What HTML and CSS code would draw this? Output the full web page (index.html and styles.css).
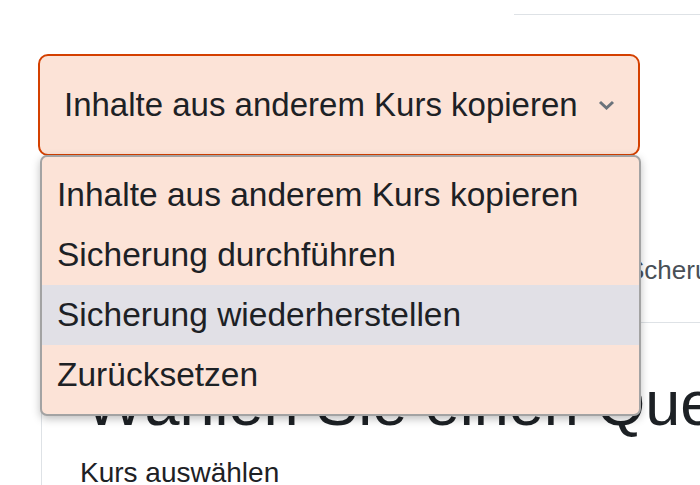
FILE: index.html
```html
<!DOCTYPE html>
<html lang="de">
<head>
    <meta charset="UTF-8">
    <meta name="viewport" content="width=device-width, initial-scale=1.0">
    <title>Import</title>
    <link rel="stylesheet" href="styles.css">
</head>
<body>
    <div class="top-bar"></div>

    <div class="action-select">
        <div class="select-box">
            <span>Inhalte aus anderem Kurs kopieren</span>
            <svg class="chevron" width="17" height="10" viewBox="0 0 17 10">
                <polyline points="2,2 8.5,8 15,2" fill="none" stroke="#6a737b" stroke-width="3"/>
            </svg>
        </div>
        <ul class="select-menu">
            <li>Inhalte aus anderem Kurs kopieren</li>
            <li>Sicherung durchführen</li>
            <li class="active">Sicherung wiederherstellen</li>
            <li>Zurücksetzen</li>
        </ul>
    </div>

    <div class="steps">Scherung</div>

    <div class="content-card">
        <h2>Wählen Sie einen Quellkurs</h2>
        <div class="field-label">Kurs auswählen</div>
    </div>
</body>
</html>
```

FILE: styles.css
```css
body {
    font-family: "Liberation Sans", Arial, sans-serif;
    color: #1d2125;
    background-color: #fff;
    margin: 0;
    width: 700px;
    height: 485px;
    overflow: hidden;
}

.top-bar {
    margin-left: 514px;
    height: 14px;
    border-bottom: 1px solid #dee2e6;
}

.action-select {
    position: relative;
    margin: 39px 0 0 38px;
    width: 602px;
}

.select-box {
    display: flex;
    justify-content: space-between;
    align-items: center;
    height: 98px;
    padding: 0 23px 0 24px;
    background-color: #fce3d7;
    border: 2px solid #d44000;
    border-radius: 10px;
    font-size: 33px;
}

.chevron {
    display: block;
}

.select-menu {
    position: absolute;
    top: 101px;
    left: 2px;
    width: 597px;
    margin: 0;
    padding: 8px 0 9px;
    list-style: none;
    background-color: #fce3d7;
    border: 2px solid #a3a3a3;
    border-radius: 7px;
    box-shadow: 0 3px 8px rgba(0, 0, 0, 0.25);
    z-index: 2;
}

.select-menu li {
    height: 60px;
    line-height: 60px;
    padding-left: 15px;
    font-size: 33.5px;
    white-space: nowrap;
}

.select-menu li.active {
    background-color: #e1e0e6;
}

.steps {
    margin-top: 99px;
    padding-left: 627px;
    height: 40px;
    font-size: 26px;
    color: #495057;
    white-space: nowrap;
}

.content-card {
    margin: 27px 0 0 41px;
    border-top: 1px solid #dee2e6;
    border-left: 1px solid #dee2e6;
    height: 300px;
    white-space: nowrap;
}

.content-card h2 {
    margin: 0;
    padding: 43px 0 0 43px;
    font-size: 63px;
    font-weight: 400;
    line-height: 1.2;
}

.field-label {
    padding: 15px 0 0 38px;
    font-size: 28px;
}
```
